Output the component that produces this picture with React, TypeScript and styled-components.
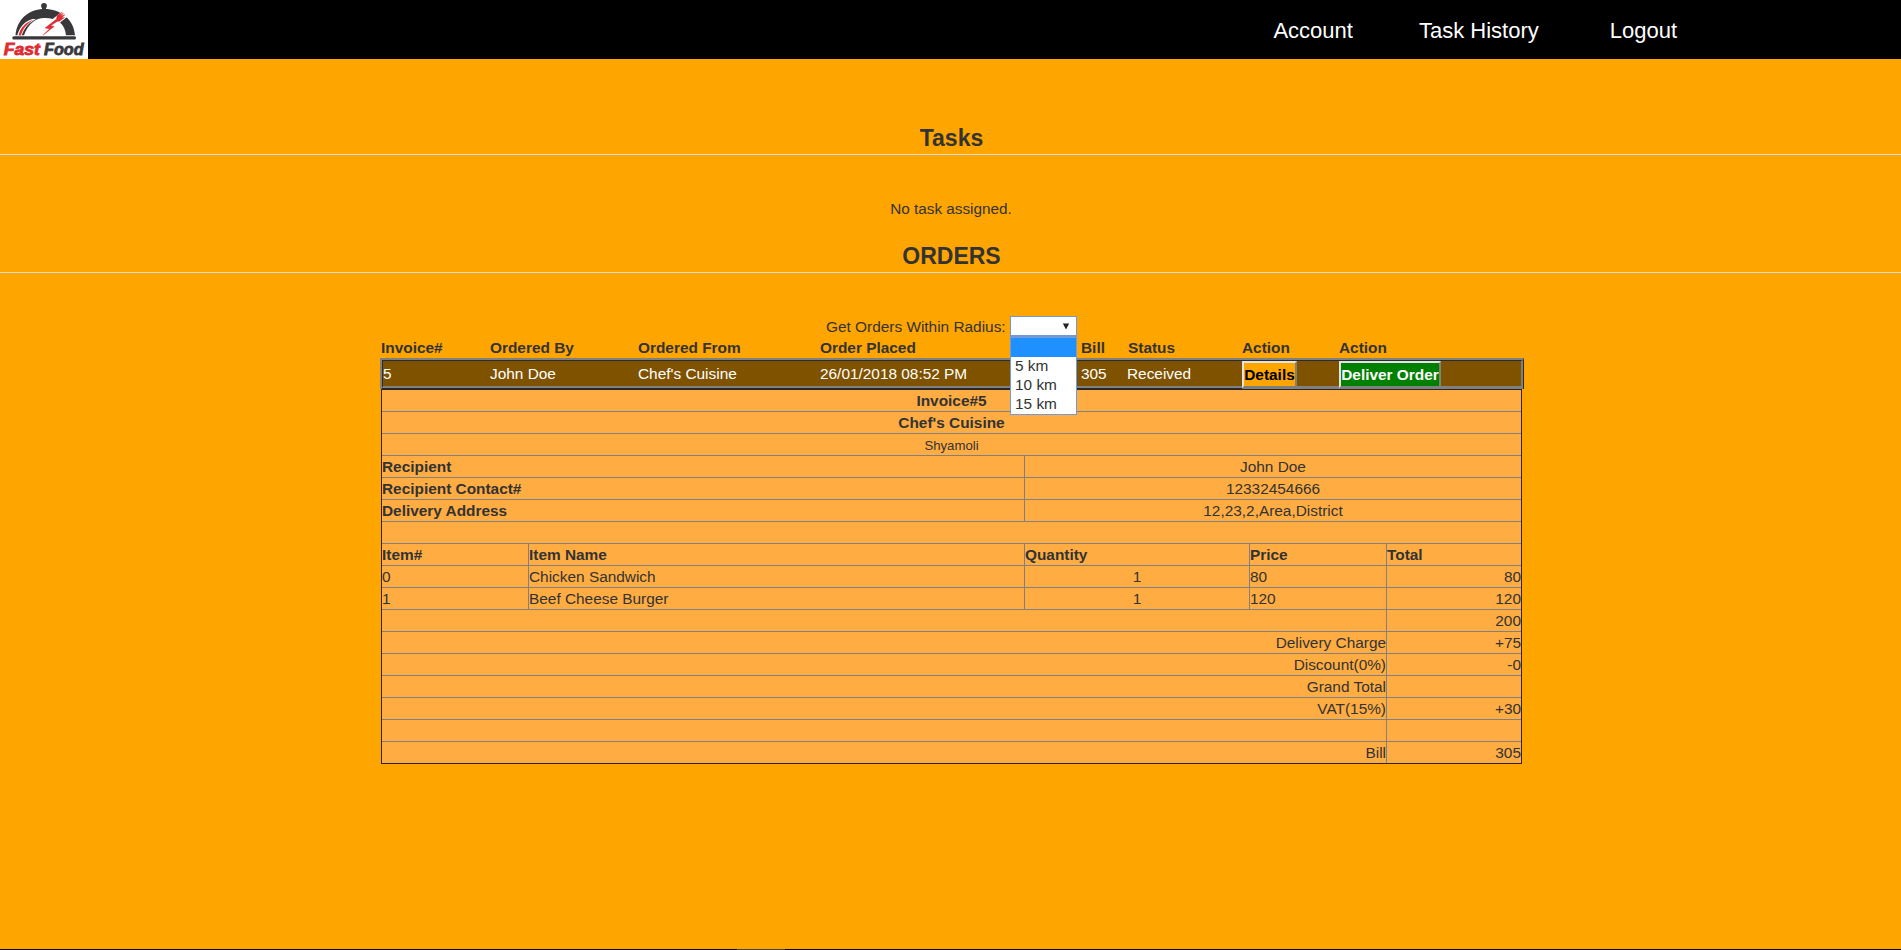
import React from "react";
import styled, { createGlobalStyle } from "styled-components";

const GlobalStyle = createGlobalStyle`
  * { box-sizing: border-box; }
  html, body { margin: 0; padding: 0; }
  body {
    background: #ffa500;
    color: #333;
    font: 15.4px/21px "Liberation Sans", Arial, sans-serif;
    overflow: hidden;
  }
`;

const Page = styled.div`
  height: 950px;
  display: flex;
  flex-direction: column;
  align-items: stretch;
`;

const Header = styled.header`
  height: 59px;
  flex: none;
  display: flex;
  justify-content: space-between;
  background: #000;
`;

const Nav = styled.nav`
  display: flex;
  padding: 18px 224px 0 0;
`;

const NavLink = styled.a<{ $gap?: number }>`
  margin-left: ${(p) => p.$gap || 0}px;
  color: #fff;
  font-size: 22px;
  line-height: 25px;
  white-space: nowrap;
`;

const Heading = styled.h2<{ $top: number }>`
  margin: ${(p) => p.$top}px 0 0;
  height: 29px;
  padding-left: 2px;
  border-bottom: 1px solid #ddd;
  font-size: 23px;
  line-height: 25px;
  text-align: center;
`;

const Message = styled.p`
  margin: 43px 0 0;
  padding-left: 1px;
  font-size: 15.3px;
  text-align: center;
`;

const Filter = styled.div`
  display: flex;
  align-items: flex-start;
  width: 251px;
  height: 22px;
  margin: 43px 0 0 826px;
  white-space: nowrap;
`;

const FilterLabel = styled.label`
  width: 184px;
`;

const SelectBox = styled.div`
  position: relative;
  width: 67px;
  height: 21px;
  background: #fff;
  border: 1px solid #7597d4;
  border-bottom-width: 2px;
`;

const Arrow = styled.svg`
  position: absolute;
  left: 51px;
  top: 6px;
`;

const Menu = styled.ul`
  position: absolute;
  z-index: 2;
  left: -1px;
  top: 20px;
  width: 67px;
  margin: 0;
  padding: 0;
  list-style: none;
  background: #fff;
  border: 1px solid #6f9be0;
`;

const Option = styled.li<{ $active?: boolean }>`
  height: 19px;
  padding-left: 4px;
  line-height: 17px;
  background: ${(p) => (p.$active ? "#1e90ff" : "#fff")};
`;

const Orders = styled.section`
  width: 1144px;
  margin-left: 380px;
`;

const OrderHead = styled.div`
  display: grid;
  grid-template-columns: 109px 148px 182px 261px 47px 114px 97px 1fr;
  height: 20px;
  padding-left: 1px;
  font-weight: bold;
  line-height: 20px;
`;

const OrderFrame = styled.div`
  height: 31px;
  padding-bottom: 1px;
  border: solid;
  border-width: 2px 1px 0 2px;
  border-color: #808080 #2c2c2c #2c2c2c #808080;
  background: linear-gradient(to right, #2c2c2c 860px, #808080 860px);
`;

const OrderRow = styled.div`
  display: grid;
  grid-template-columns: 107px 148px 182px 261px 46px 115px 97px 1fr;
  height: 28px;
  border: solid;
  border-width: 1px 2px 2px 1px;
  border-color: #2c2c2c #808080 #808080 #2c2c2c;
  background: #7f5200;
  color: #fff;
  line-height: 25px;
  white-space: nowrap;
`;

const ActionButton = styled.button<{ $bg: string; $color: string; $width: number }>`
  display: block;
  width: ${(p) => p.$width}px;
  height: 27px;
  padding: 0;
  border: 2px solid;
  border-color: #e3e3e3 #808080 #808080 #e3e3e3;
  background: ${(p) => p.$bg};
  color: ${(p) => p.$color};
  font: bold 15.4px/23px "Liberation Sans", Arial, sans-serif;
  white-space: nowrap;
`;

const Invoice = styled.div`
  width: 1141px;
  height: 375px;
  margin-left: 1px;
  border: 1px solid #2c2420;
  background: #ffac42;
`;

const layouts = {
  full: "1139px",
  half: "643px 496px",
  item: "147px 496px 225px 137px 134px",
  sum: "1005px 134px",
};

const InvoiceRow = styled.div<{ $layout: keyof typeof layouts }>`
  display: grid;
  grid-template-columns: ${(p) => layouts[p.$layout]};
  height: 22px;
  border-bottom: 1px solid #808080;
  &:last-child {
    height: 21px;
    border-bottom: 0;
  }
`;

const Cell = styled.div<{ $align?: string; $bold?: boolean; $small?: boolean }>`
  border-right: 1px solid #808080;
  text-align: ${(p) => p.$align || "left"};
  font-weight: ${(p) => (p.$bold ? "bold" : "normal")};
  font-size: ${(p) => (p.$small ? "13.2px" : "15.4px")};
  line-height: ${(p) => (p.$small ? "23px" : "21px")};
  white-space: nowrap;
  &:last-child {
    border-right: 0;
  }
`;

const BottomEdge = styled.div`
  display: flex;
  height: 1px;
  margin-top: auto;
  padding-left: 737px;
  background: #0a0500;
`;

const EdgeTab = styled.div`
  width: 48px;
  background: #4a4038;
`;

const Logo = () => (
  <svg width="88" height="59" viewBox="0 0 88 59">
    <rect width="88" height="59" fill="#fff" />
    <circle cx="44" cy="5.8" r="2.9" fill="#38383b" />
    <path d="M42 7h4v3h-4z" fill="#38383b" />
    <path
      d="M15.5 35.2C17 19 29 9 44.5 9S74 19 75 35.2H66C65.5 30 63.5 25.5 60 22.5C55 19 50 17.8 44 18C36 18.3 28.5 23 24 35.2Z"
      fill="#38383b"
    />
    <path d="M17.3 35.2C19.5 27 25 21 32.5 19L36 19.2C29 22.5 24 28 21.8 35.2Z" fill="#fff" />
    <path d="M18.7 35.2C20.2 28 25.5 22 33.5 19.7C27 23.5 22.8 29 21 35.2Z" fill="#df2b32" />
    <path d="M49 22L62 11.5L67 17L57 25Z" fill="#fff" />
    <path
      d="M43 35.2L49.5 28.8L45 28L51.5 23L56.5 19L57 15.5L62.3 12L59.8 15.2L63.5 13.2L61 16.2L65 14.6L61.8 18L64.6 17.4L59.5 21.3L57 21.5L50.8 25.8L54.2 26.4Z"
      fill="#df2b32"
      stroke="#df2b32"
      strokeWidth="0.4"
    />
    <rect x="12.3" y="36.3" width="63.7" height="3.2" rx="1.5" fill="#38383b" />
    <g
      fontFamily="Liberation Sans, Arial, sans-serif"
      fontSize="16"
      fontWeight="bold"
      fontStyle="italic"
      strokeWidth="0.8"
    >
      <text x="3.8" y="54.8" textLength="36" lengthAdjust="spacingAndGlyphs" fill="#df2b32" stroke="#df2b32">
        Fast
      </text>
      <text x="44" y="54.8" textLength="39.5" lengthAdjust="spacingAndGlyphs" fill="#38383b" stroke="#38383b">
        Food
      </text>
    </g>
  </svg>
);

const recipient = [
  ["Recipient", "John Doe"],
  ["Recipient Contact#", "12332454666"],
  ["Delivery Address", "12,23,2,Area,District"],
];

const items = [
  ["0", "Chicken Sandwich", "1", "80", "80"],
  ["1", "Beef Cheese Burger", "1", "120", "120"],
];

const totals = [
  ["", "200"],
  ["Delivery Charge", "+75"],
  ["Discount(0%)", "-0"],
  ["Grand Total", ""],
  ["VAT(15%)", "+30"],
  ["", ""],
  ["Bill", "305"],
];

const itemHeads = ["Item#", "Item Name", "Quantity", "Price", "Total"];
const orderHeads = ["Invoice#", "Ordered By", "Ordered From", "Order Placed", "Bill", "Status", "Action", "Action"];

export default function App() {
  return (
    <>
      <GlobalStyle />
      <Page>
        <Header>
          <Logo />
          <Nav>
            <NavLink>Account</NavLink>
            <NavLink $gap={66}>Task History</NavLink>
            <NavLink $gap={71}>Logout</NavLink>
          </Nav>
        </Header>

        <Heading $top={67}>Tasks</Heading>
        <Message>No task assigned.</Message>
        <Heading $top={25}>ORDERS</Heading>

        <Filter>
          <FilterLabel>Get Orders Within Radius:</FilterLabel>
          <SelectBox>
            <Arrow width="8" height="7" viewBox="0 0 8 7">
              <path d="M0.8 0.5H7.2L4 6.5Z" fill="#222" />
            </Arrow>
            <Menu>
              <Option $active />
              <Option>5 km</Option>
              <Option>10 km</Option>
              <Option>15 km</Option>
            </Menu>
          </SelectBox>
        </Filter>

        <Orders>
          <OrderHead>
            {orderHeads.map((h, i) => (
              <span key={i}>{h}</span>
            ))}
          </OrderHead>
          <OrderFrame>
            <OrderRow>
              <span>5</span>
              <span>John Doe</span>
              <span>Chef's Cuisine</span>
              <span>26/01/2018 08:52 PM</span>
              <span>305</span>
              <span>Received</span>
              <ActionButton $bg="#ffa500" $color="#000" $width={55}>
                Details
              </ActionButton>
              <ActionButton $bg="#008000" $color="#fff" $width={102}>
                Deliver Order
              </ActionButton>
            </OrderRow>
          </OrderFrame>

          <Invoice>
            <InvoiceRow $layout="full">
              <Cell $align="center" $bold>Invoice#5</Cell>
            </InvoiceRow>
            <InvoiceRow $layout="full">
              <Cell $align="center" $bold>Chef's Cuisine</Cell>
            </InvoiceRow>
            <InvoiceRow $layout="full">
              <Cell $align="center" $small>Shyamoli</Cell>
            </InvoiceRow>
            {recipient.map(([label, value]) => (
              <InvoiceRow $layout="half" key={label}>
                <Cell $bold>{label}</Cell>
                <Cell $align="center">{value}</Cell>
              </InvoiceRow>
            ))}
            <InvoiceRow $layout="full" />
            <InvoiceRow $layout="item">
              {itemHeads.map((h) => (
                <Cell $bold key={h}>{h}</Cell>
              ))}
            </InvoiceRow>
            {items.map((row) => (
              <InvoiceRow $layout="item" key={row[0]}>
                {row.map((v, i) => (
                  <Cell key={i} $align={i === 2 ? "center" : i === 4 ? "right" : "left"}>
                    {v}
                  </Cell>
                ))}
              </InvoiceRow>
            ))}
            {totals.map(([label, value], i) => (
              <InvoiceRow $layout="sum" key={i}>
                <Cell $align="right">{label}</Cell>
                <Cell $align="right">{value}</Cell>
              </InvoiceRow>
            ))}
          </Invoice>
        </Orders>

        <BottomEdge>
          <EdgeTab />
        </BottomEdge>
      </Page>
    </>
  );
}
